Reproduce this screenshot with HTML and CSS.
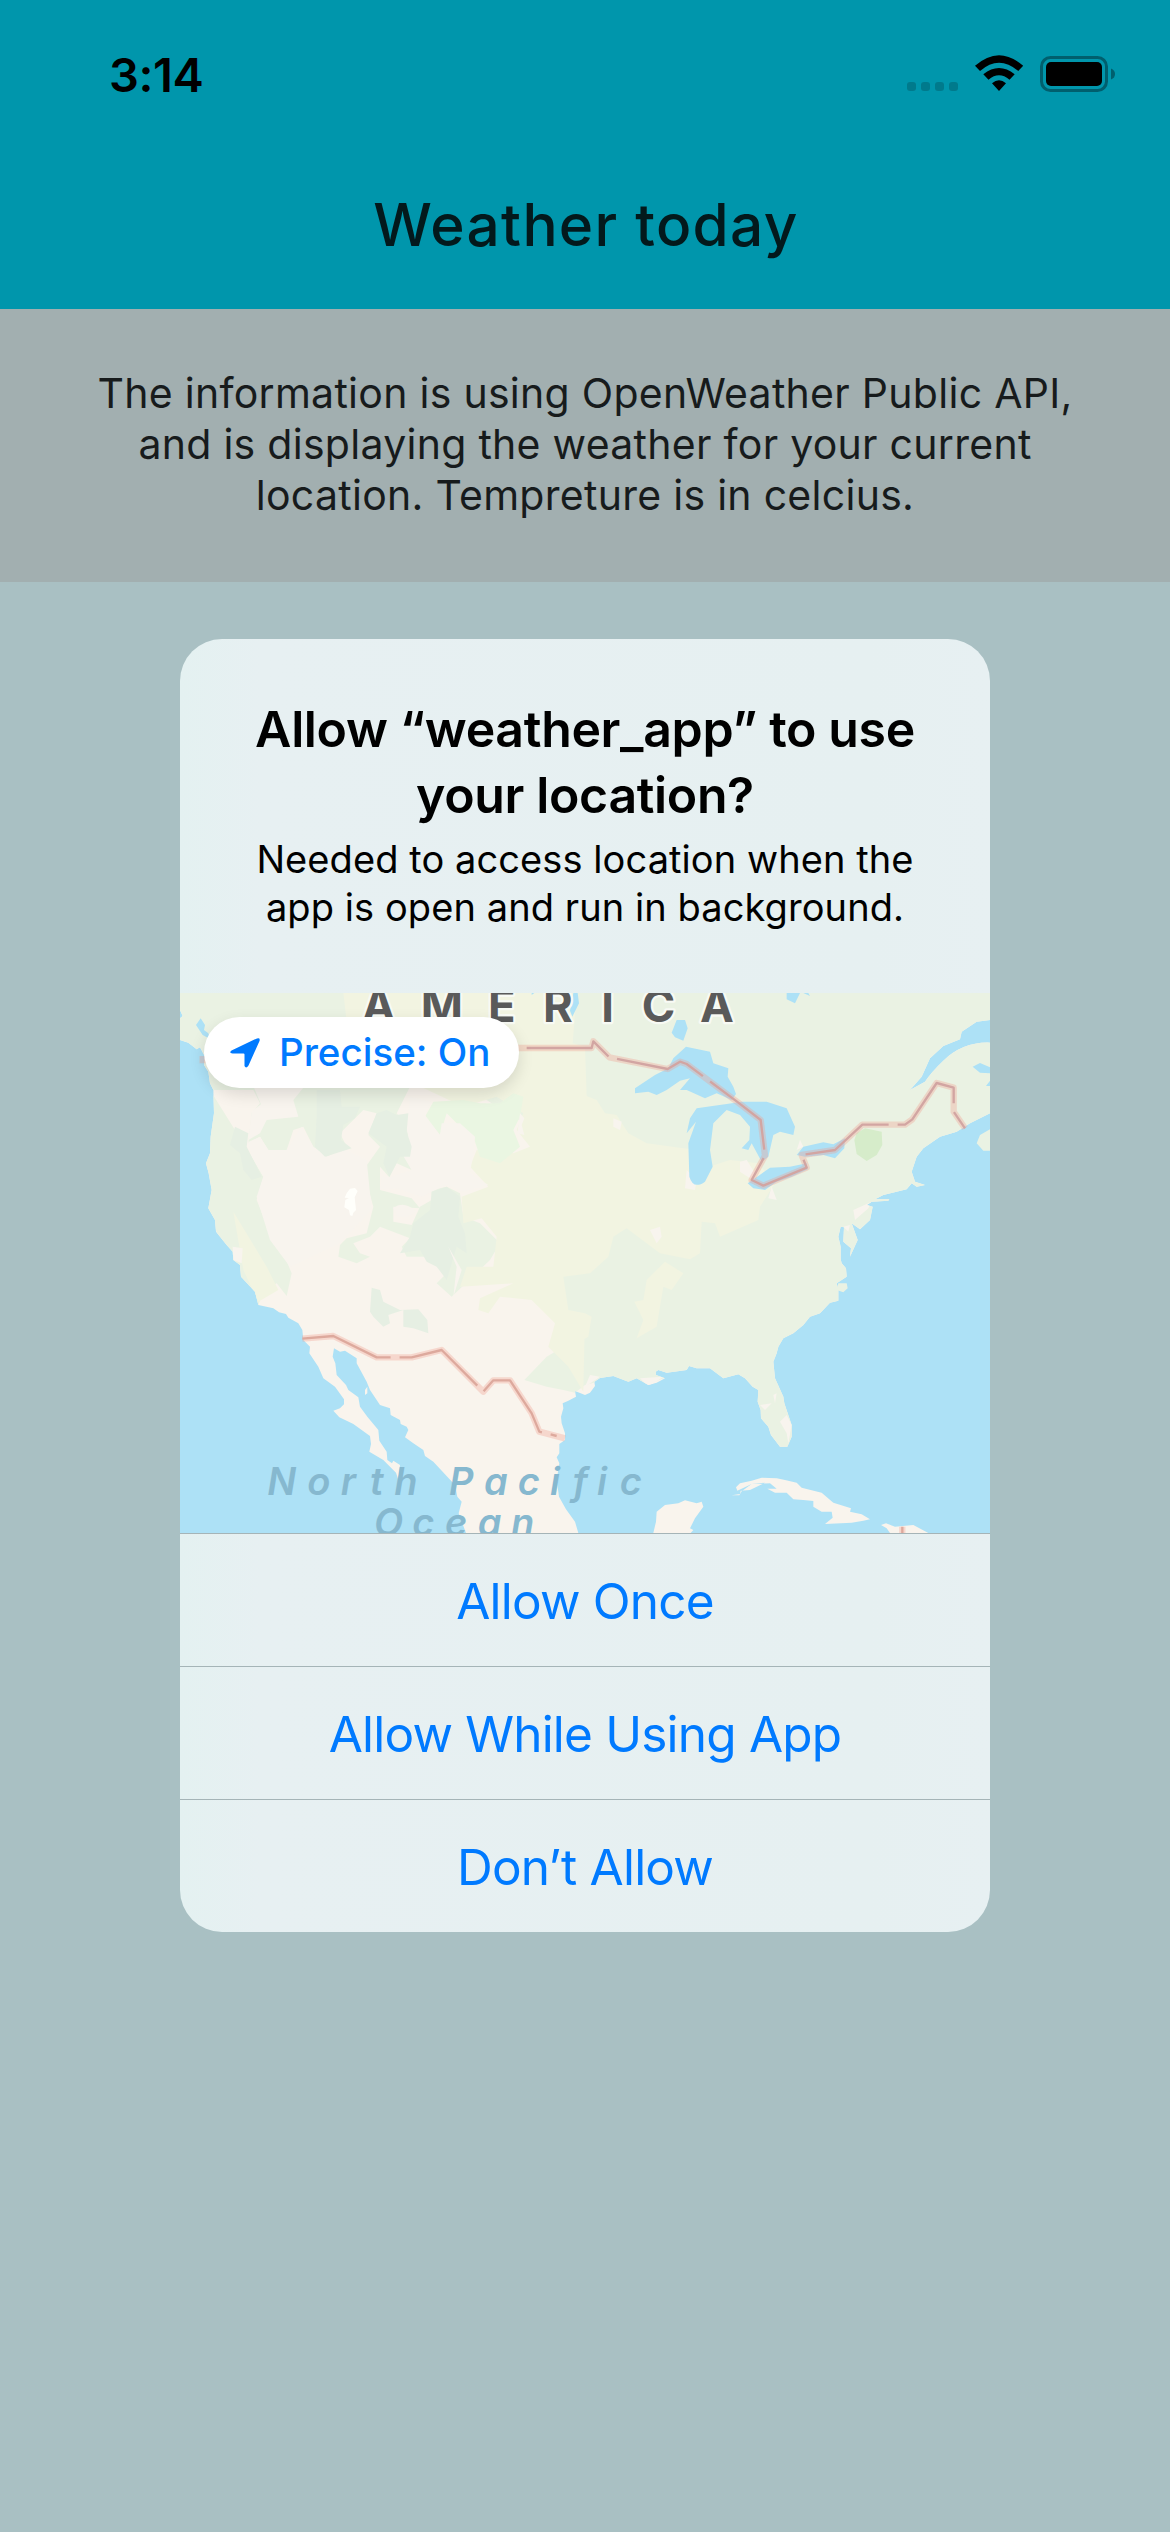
FILE: index.html
```html
<!DOCTYPE html>
<html lang="en">
<head>
<meta charset="utf-8">
<title>Weather today</title>
<link rel="stylesheet" href="styles.css">
</head>
<body>
<header class="app-header">
  <div class="status-bar">
    <span class="clock">3:14</span>
    <svg class="status-icons" viewBox="0 0 270 90" aria-hidden="true">
      <g fill="#007a8c"><rect x="27" y="22" width="9" height="9" rx="3"/><rect x="41" y="22" width="9" height="9" rx="3"/><rect x="55" y="22" width="9" height="9" rx="3"/><rect x="69" y="22" width="9" height="9" rx="3"/></g>
      <path d="M95 5.800Q119-15.500 143.200 5.800L138.200 11Q119-5.500 100 11ZM103.300 14.200Q119 1.800 134.700 14.200L129.500 19.700Q119 11 108.500 19.700ZM112 23.200Q119 17.300 126 23.200L119 31Z"/>
      <rect x="161.500" y="-2.500" width="65" height="33" rx="9" fill="none" stroke="#005f6e" stroke-width="3"/>
      <rect x="166" y="2" width="56" height="24" rx="5"/>
      <path d="M231 8.500Q235 10 235 14T231 19.500Z" fill="#005f6e"/>
    </svg>
  </div>
  <h1 class="app-title">Weather today</h1>
</header>
<section class="notice">The information is using OpenWeather Public API,<br>and is displaying the weather for your current<br>location. Tempreture is in celcius.</section>
<main class="stage">
  <section class="dialog" role="dialog">
    <div class="dialog-text">
      <h2 class="dialog-title">Allow “weather_app” to use<br>your location?</h2>
      <p class="dialog-message">Needed to access location when the<br>app is open and run in background.</p>
    </div>
    <div class="map">
      <svg class="map-art" viewBox="0 9 2430 1620" preserveAspectRatio="none">
        <defs>
          <path id="land" d="M0 9V60L8 78 0 85V150L25 158 50 178 60 172 75 200 72 225 85 245 90 280 100 300 102 370 92 440 90 490 78 520 86 550 95 600 85 655 105 690 108 725 140 765 158 785 160 810 180 825 183 860 225 905 235 945 280 955 297 967 318 972 325 983 355 1000 367 1020 370 1050 390 1070 388 1090 415 1130 430 1165 465 1190 492 1228 492 1243 480 1255 460 1262 478 1282 520 1302 570 1338 573 1362 568 1385 610 1410 648 1448 655 1470 660 1425 640 1412 636 1420 622 1410 620 1385 598 1352 595 1320 562 1280 540 1250 535 1222 505 1200 498 1185 470 1155 466 1120 458 1100 462 1075 480 1085 495 1082 530 1105 530 1120 560 1175 570 1200 600 1245 630 1255 632 1275 660 1290 662 1302 680 1310 685 1320 675 1342 700 1360 730 1380 735 1398 760 1415 825 1485 832 1520 845 1535 836 1570 858 1629H1195L1185 1595 1158 1558 1137 1520 1130 1470 1138 1420 1130 1402 1138 1390 1138 1362 1155 1350 1155 1330 1145 1300 1143 1280 1150 1255 1148 1240 1165 1232 1188 1220 1185 1203 1215 1215 1230 1208 1245 1188 1243 1175 1260 1164 1300 1158 1345 1175 1370 1165 1405 1185 1430 1178 1455 1165 1428 1155 1427 1145 1435 1140 1460 1148 1520 1140 1527 1128 1550 1135 1590 1135 1630 1165 1675 1153 1695 1165 1718 1190 1735 1200 1733 1235 1742 1260 1743 1285 1765 1310 1773 1335 1800 1370 1822 1370 1835 1340 1835 1305 1813 1240 1810 1220 1785 1165 1780 1115 1790 1090 1795 1070 1810 1045 1840 1030 1870 1005 1890 980 1920 970 1950 938 1975 932V900L1970 880 2000 860 1998 835 1985 820 1982 808V770L1975 740 1982 710 1992 712 1990 755 2013 775 2010 800 2033 750 2015 700 2040 718 2070 690 2078 650 2060 645 2075 635 2125 632 2128 628 2085 628 2110 615 2180 598 2195 580 2210 590 2235 585 2205 575 2195 545 2210 500 2230 475 2280 440 2330 425 2370 400 2430 370V158Q2350 155 2290 212Q2255 245 2235 275L2190 300 2225 260 2250 205 2290 168 2340 148 2345 125 2390 95 2430 90V9Z"/>
          <clipPath id="land-area"><use href="#land"/></clipPath>
        </defs>
        <rect y="9" width="2430" height="1620" fill="#ade1f6"/>
        <use href="#land" fill="#f9f4ed"/>
        <g clip-path="url(#land-area)">
          <path fill="#eaf2e3" d="M0 9H2430V1400H1700L1600 1190 1465 1160 1380 1190 1255 1175 1215 1185 1185 1208 1150 1200 1100 1190 1033 1170 1100 1100 1150 1070 1165 1000 1145 850 1200 500 870 300 750 260 690 290 650 370 690 420 665 480 695 540 650 520 628 562 600 530 600 600 695 625 720 655 640 650 640 695 695 705 720 650 755 630 755 600 800 590 840 610 850 680 900 700 960 760 930 810 815 920 770 880 800 850 740 800 680 800 665 770 690 745 600 710 570 740 520 760 540 790 570 800 530 820 475 800 480 765 500 745 560 730 580 650 550 540 600 470 565 435 590 370 550 360 480 430 500 470 440 500 400 470 370 410 340 420 320 480 265 480 240 440 205 460 215 370 240 340 220 300 90 300 215 500 250 560 230 630 270 730 310 790 335 850 320 918 290 880 250 905 235 945 150 810 0 500Z"/>
          <path fill="#f8f4ee" d="M205 456L240 440 265 480 320 480 365 410 400 470 440 500 500 480 560 510 575 660 480 760 330 830 270 750 230 620 250 560 215 500ZM222 293H370L340 330 355 380 260 390 240 430 205 450 215 365 243 343Z"/>
          <path fill="#f2f4e1" d="M490 9H1190L1178 160 1215 170 1220 318 1250 330 1275 370 1310 375 1345 430 1400 460 1550 480 1540 545 1650 510 1735 520 1785 580 1740 650 1735 690 1620 740 1605 700 1565 695 1560 790 1530 808 1440 790 1340 715 1300 740 1285 800 1230 850 1150 860 1165 960 1215 970 1210 1205 1165 1130 1105 1070 1125 1000 1055 930 960 920 925 970 895 960 900 925 1000 880 840 890 860 830 940 830 950 740 905 685 850 700 845 620 925 590 870 530 890 480 1000 490 1050 470 1010 420 1030 370 950 320 850 350 700 280 510 180ZM160 665L260 830 295 900 235 935 190 840ZM1215 970L1235 980 1225 1040 1190 1060ZM1455 815L1510 850 1475 900 1450 890 1430 1010 1370 1045 1390 990 1363 935 1390 930 1400 870Z"/>
          <path fill="#eaf6e2" d="M850 330L900 340 960 340 1000 310 1030 320 1020 380 1000 420 1020 470 960 520 900 500 880 440 850 420 800 370 780 435 735 380 760 335Z"/>
          <path fill="#f8f4ee" d="M690 320L755 335 735 375 780 435 785 400 840 400 885 440 880 490 870 550 925 585 850 605 800 585 755 605 725 620 650 595 600 600 605 560 628 562 695 540 665 490 690 455 680 420ZM1020 370L1033 385 1025 405 1033 435 1012 430ZM1680 515L1700 510 1725 550 1710 565 1680 545ZM1520 540L1550 570 1545 600 1515 595ZM1860 450L1870 470 1850 480ZM1775 590L1790 630 1765 625ZM1300 385L1325 395 1320 420 1300 410ZM1410 720L1440 710 1445 740 1430 760ZM1380 1165L1450 1160 1405 1190ZM1230 1155L1260 1160 1215 1190ZM1740 1245L1775 1240 1755 1260ZM1800 1295L1820 1275 1835 1305 1825 1360 1820 1330ZM1780 1215L1790 1210 1785 1240ZM2020 660L2075 635 2065 655 2025 690ZM1990 710L2010 705 2005 725ZM158 770L188 775 185 820 160 810Z"/>
          <path fill="#e6efe3" d="M410 300H480L485 350 540 350 525 385 490 405 483 450 515 475 435 500 405 470 410 380ZM590 370L620 360 650 375 685 370 680 425 695 470 690 500 660 500 628 560 610 520 620 470 565 430ZM165 410L205 430 200 470 245 560 215 570 190 540 180 490 150 465ZM755 605L800 590 840 620 835 680 855 730 860 790 830 770 800 870 770 830 740 815 720 780 660 790 690 740 700 700 750 660ZM575 893L600 900 610 935 660 960 715 958 742 990 745 1030 700 1015 670 1010V960L625 975 630 1000 610 1010 580 980 570 965Z"/>
          <path fill="#f8f4ee" d="M640 655Q670 630 710 665L685 680 650 680ZM805 770L830 830 820 920 845 840Z"/>
          <path fill="#fffffb" d="M500 610L510 596 525 594 533 603 524 622 528 660 520 668 517 678 510 676 507 660 493 652 496 630 507 624 494 623Z"/>
          <path fill="#d6ecca" d="M2030 430L2055 415 2105 425 2107 465 2090 495 2060 513 2030 492 2023 450Z"/>
        </g>
        <g fill="#ade1f6">
          <path d="M48 105L62 85 75 105 72 120 85 130 90 147 68 135ZM1055 9H1063L1055 15ZM1180 9H1193L1197 40 1177 80 1170 62ZM1490 90H1515L1523 115 1510 152 1485 142 1475 128Z"/>
          <path d="M1820 9H1860L1845 40 1820 28ZM1870 9H1885L1890 18ZM2378 230L2400 219 2430 232V250L2400 248ZM2430 272L2418 288H2430Z"/>
          <path d="M1365 295L1425 255 1465 235 1480 205 1518 170 1590 185 1600 220 1645 235 1643 260 1660 290 1668 312 1655 330 1610 310 1575 325 1520 300 1500 300 1530 265 1500 272 1460 300 1430 315 1405 305 1365 310Z"/>
          <path d="M1550 355L1530 385 1520 430 1548 395 1525 460 1528 560Q1540 600 1575 575L1598 530 1590 480 1600 400 1640 360 1680 375 1710 410 1708 450 1685 475 1705 480 1715 460 1745 515 1765 500 1780 435 1800 425 1840 435 1845 410 1820 355 1760 335H1685L1640 342Z"/>
          <path d="M1703 580L1770 533 1830 530 1880 520 1883 538 1835 560 1790 575 1755 600 1720 595ZM1850 495L1870 470 1930 457 1960 463 1995 445 1993 475 1965 505 1930 495 1875 500Z"/>
        </g>
        <g fill="#f9f4ed">
          <path fill="#eaf2e3" d="M2430 418L2400 435 2390 460 2410 482 2430 482ZM1975 880L2000 880 2003 895 1990 907 1970 900Z"/>
          <path d="M1655 1516L1680 1512 1682 1502 1710 1500 1755 1478 1735 1480 1715 1482 1672 1502 1668 1492 1680 1480 1715 1472 1745 1463 1790 1465 1815 1470 1850 1478 1865 1493 1925 1508 1960 1538 2013 1555 2010 1565 2045 1573 2070 1588 2050 1592 2015 1598 1935 1602 1958 1583 1955 1565 1925 1565 1900 1550V1533L1870 1530 1840 1528 1820 1508 1785 1508 1762 1496 1790 1496 1770 1480 1715 1482 1685 1504 1678 1516ZM1420 1629L1428 1595 1430 1565 1455 1545 1495 1540 1515 1531 1550 1540 1565 1535 1570 1550 1545 1585 1530 1615 1540 1620 1532 1629ZM2103 1605L2118 1600 2145 1610 2200 1605 2245 1629H2130L2120 1615ZM555 1200L562 1190V1210L555 1215Z"/>
        </g>
        <g fill="none" stroke-linejoin="round">
          <g stroke="#ef9d90" stroke-opacity=".34" stroke-width="19">
            <path d="M68 198V220M950 174H1235L1240 154 1288 202 1463 237 1500 215 1520 222 1675 338 1742 390 1755 497 1715 570 1750 587 1880 533 1865 495 1965 480 2047 404H2175L2197 388 2270 279 2321 293V365L2355 415"/>
            <path d="M367 1046L460 1038 590 1102H695L785 1080 910 1205 940 1171H990L1055 1270 1078 1325 1155 1345M2167 1610V1629"/>
          </g>
          <g stroke="#dda99d" stroke-width="7" stroke-dasharray="280 27">
            <path stroke="#d2a5a2" d="M1040 174H1235L1240 154 1288 202 1463 237 1500 215 1520 222 1675 338 1742 390 1755 497 1715 570 1750 587 1880 533 1865 495 1965 480 2047 404H2175L2197 388 2270 279 2321 293V365L2355 415"/>
            <path d="M367 1046L460 1038 590 1102H695L785 1080 910 1205 940 1171H990L1055 1270 1078 1325 1130 1338M2167 1610V1629"/>
          </g>
        </g>
        <text class="country-name" y="97" x="545 722 924 1089 1264 1385 1560">AMERICA</text>
        <text class="ocean-name" y="1515" x="262 382 482 570 643 700 807 912 1013 1110 1178 1251 1319">North Pacific</text>
        <text class="ocean-name" y="1638" x="582 697 795 893 993">Ocean</text>
      </svg>
      <div class="precise-pill">
        <svg class="location-arrow" viewBox="0 0 30 30" aria-hidden="true"><path d="M1.500 12.500L27 .400Q30.500-.600 29.500 3L18.500 27.500Q16 31 14.500 28V16.500Q14.500 15.500 13.500 15.500H2.500Q-1.500 15 1.500 12.500Z"/></svg>
        <span class="precise-label">Precise: On</span>
      </div>
    </div>
    <button class="choice">Allow Once</button>
    <button class="choice">Allow While Using App</button>
    <button class="choice">Don’t Allow</button>
  </section>
</main>
</body>
</html>
```
FILE: styles.css
```css
* { box-sizing: border-box; }
body {
  margin: 0;
  width: 1170px;
  height: 2532px;
  overflow: hidden;
  display: flex;
  flex-direction: column;
  background: #a9c0c3;
  font-family: Inter, "Liberation Sans", sans-serif;
  white-space: nowrap;
}
h1, h2, p { margin: 0; }
.app-header { height: 309px; flex: none; background: #0096ac; }
.status-bar {
  height: 150px;
  padding-left: 109px;
  padding-right: 20px;
  display: flex;
  align-items: center;
  justify-content: space-between;
}
.clock { font-size: 47px; font-weight: 600; letter-spacing: -.4px; padding-bottom: 2px; }
.status-icons { width: 270px; height: 90px; overflow: visible; margin-top: 60px; }
.app-title {
  color: #03191c;
  text-align: center;
  font-size: 58.5px;
  line-height: 70px;
  font-weight: 450;
  letter-spacing: 1.3px;
  margin-top: 40px;
  padding-left: 2px;
}
.notice {
  height: 273px;
  flex: none;
  padding-top: 59px;
  background: #a2afb0;
  color: #171b1c;
  text-align: center;
  font-size: 41px;
  line-height: 51px;
  letter-spacing: .28px;
}
.stage { padding-top: 57px; display: flex; justify-content: center; }
.dialog {
  width: 810px;
  height: 1293px;
  border-radius: 42px;
  overflow: hidden;
  background: linear-gradient(90deg, #e4f1f1, #e7f0f2 10%, #e6f0f1 85%, #e7f0f2);
}
.dialog-text { height: 354px; padding-top: 57px; text-align: center; }
.dialog-title { font-size: 50px; line-height: 66px; font-weight: 600; letter-spacing: -.35px; }
.dialog-message { margin-top: 7px; font-size: 38px; line-height: 48px; letter-spacing: .08px; }
.map { position: relative; height: 540px; overflow: hidden; }
.map-art { display: block; width: 810px; height: 540px; }
.country-name {
  font-size: 136px;
  font-weight: 700;
  fill: #5a5a5a;
  stroke: #f8faf4;
  stroke-width: 14px;
  stroke-linejoin: round;
  paint-order: stroke;
}
.ocean-name { font-size: 114px; font-style: italic; font-weight: 600; fill: #86b8cf; }
.precise-pill {
  position: absolute;
  left: 24px;
  top: 24px;
  width: 315px;
  height: 71px;
  border-radius: 36px;
  padding-left: 26px;
  display: flex;
  align-items: center;
  gap: 19px;
  background: #fff;
  color: #007aff;
  box-shadow: 0 6px 16px rgba(0, 0, 0, .12);
}
.location-arrow { width: 30px; height: 30px; fill: #007aff; }
.precise-label { font-size: 38.5px; font-weight: 550; padding-bottom: 2px; }
.choice {
  display: block;
  width: 100%;
  height: 133px;
  padding: 2px 0 0;
  border: 0;
  border-top: 1px solid #a5b4b7;
  background: transparent;
  color: #007aff;
  font: 400 49.5px/130px Inter, "Liberation Sans", sans-serif;
  letter-spacing: -.8px;
}
```
